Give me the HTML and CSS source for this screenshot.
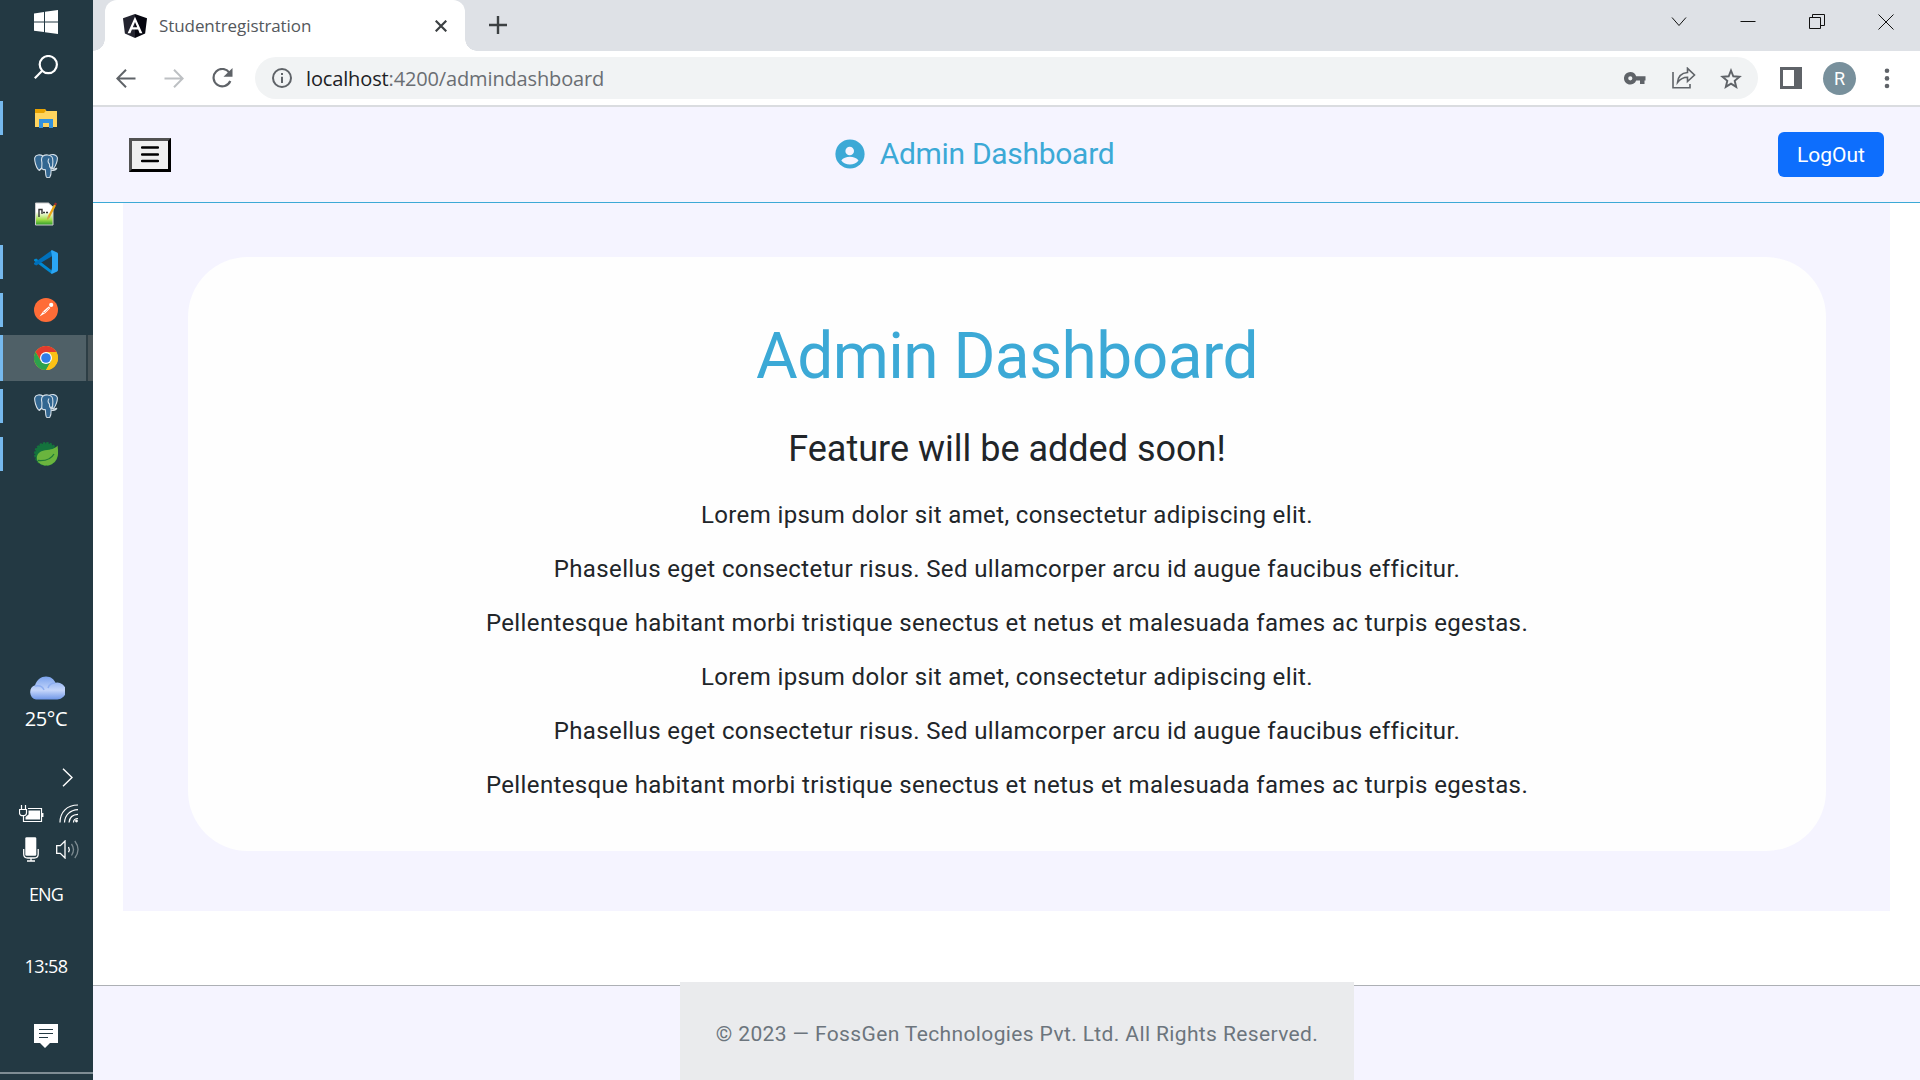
FILE: index.html
```html
<!DOCTYPE html>
<html lang="en">
<head>
<meta charset="utf-8">
<title>Studentregistration</title>
<link rel="stylesheet" href="styles.css">
</head>
<body>
<aside class="taskbar">
  <div class="task start"><svg width="24" height="24" viewBox="0 0 24 24" fill="#fff"><path d="M0 3.4 10 2v9.600H0zM11 1.800 24 0v11.600H11zM0 12.600h10V22L0 20.700zM11 12.600h13V24l-13-1.800z"/></svg></div>
  <div class="task search"><svg width="24" height="24" viewBox="0 0 24 24" fill="none" stroke="#fff" stroke-width="2.2"><circle cx="14.3" cy="9.6" r="8.6"/><path d="M8.2 15.8.8 23.2"/></svg></div>
  <div class="task app running"><svg width="24" height="24" viewBox="0 0 24 24"><path d="M1 3h10l1.500 2H23v16H1z" fill="#ffd45e"/><path d="M1 3h9.500l1.500 1.500-2 2.500H1z" fill="#e8a200"/><path d="M5 13h14v9h-4v-5H9v5H5z" fill="#3391dc"/></svg></div>
  <div class="task app"><svg width="24" height="24" viewBox="0 0 24 24"><use href="#elephant"/></svg></div>
  <div class="task app"><svg width="24" height="24" viewBox="0 0 24 24"><defs><linearGradient id="note" x1="0" y1="0" x2="0" y2="1"><stop offset=".4" stop-color="#fff"/><stop offset=".75" stop-color="#a5e04a"/><stop offset="1" stop-color="#2a9a28"/></linearGradient></defs><path d="M1.500 1h13l4.500 4v18H1.500z" fill="url(#note)" stroke="#ccc"/><path d="M5 15V7.500h3V12m1-1.500h2m1 0h2" fill="none" stroke="#333" stroke-width="1.400"/><path d="m13 18 1-4 6-11.500 2 1.100L16 15z" fill="#e9a616"/><path d="m20 2.500 1-2 2 1-1 2z" fill="#a52b2b"/><path d="m13 18 1-4 2 1z" fill="#c79d62"/></svg></div>
  <div class="task app running"><svg width="24" height="24" viewBox="0 0 24 24"><path d="m2.200 8.600 15.600 12V24L0 10.800v-1.200z" fill="#0089d2"/><path d="m2.200 15.400-2.200-1.100v-1.300L17.800.2 18 6.300z" fill="#0070bb"/><path d="m17.800 0 5.300 2.600q.9.400.9 1.400v16q0 1-.9 1.400L17.800 24l-.8-1 1-5.300V6.300L17 1z" fill="#2aa5f4"/></svg></div>
  <div class="task app running"><svg width="24" height="24" viewBox="0 0 24 24"><circle cx="12" cy="12" r="12" fill="#ff6c37"/><path d="m5.500 18.500 4-5.500 5.200-4.600 1.600 1.600-4.800 5z" fill="#fff"/><circle cx="17.200" cy="6.900" r="2.100" fill="#fff"/><path d="m8.500 13 1.500 2 5-5" fill="none" stroke="#ff8d65" stroke-width=".7"/></svg></div>
  <div class="task app running active"><svg width="24" height="24" viewBox="0 0 24 24"><circle cx="12" cy="12" r="12" fill="#fbc116"/><path d="M1.600 6A12 12 0 0 1 22.400 6H12L6.800 15z" fill="#e33b2e"/><path d="M1.600 6A12 12 0 0 0 12 24l5.200-9H6.800z" fill="#2da14d"/><path d="M12 24 17.200 15V6h5.200A12 12 0 0 1 12 24z" fill="#fbc116"/><circle cx="12" cy="12" r="6" fill="#fff"/><circle cx="12" cy="12" r="4.800" fill="#2f7de9"/></svg></div>
  <div class="task app running"><svg width="24" height="24" viewBox="0 0 24 24"><g id="elephant" fill="#336791" stroke="#d5e0e8" stroke-width="1.100" stroke-linejoin="round"><path d="M15 1.500c3-1.500 7-1.300 8.200 1.600.8 2.600-1.400 8.900-3.600 11.300l-2.600-.4z"/><path d="M9 2C6 .2 1.700.4.8 3.600c-.7 3 1.600 10.600 3.700 12.300 1.300 1 3-1.700 4-3z"/><path d="M9 2c2.800-1.800 7-1.400 9 1 1.400 2 .8 6 .6 9-.2 1.500-1.600 1.800-1.500 3.200.1 3.200-.1 6-1.100 7.600-1 1.200-3 1.200-3.700 0-.9-1.800-.6-4.900-1-7.300-1.400.2-3.300.1-3.500-1.600-.2-2 .5-4.300-.1-6.600C7.200 5 7.500 3.300 9 2z"/><path d="M18 12.500c-.5 2 .5 3.300 4.800 1.700-.5 1.500-3 2.500-5.700 2M15 4.500q-2 3 .4 5.500-.4 3 1.700 4.500M8 14l-3 2.500" fill="none"/></g></svg></div>
  <div class="task app running"><svg width="24" height="24" viewBox="0 0 24 24"><circle cx="12" cy="12" r="10.800" fill="#14733d"/><circle cx="12" cy="12" r="11" fill="none" stroke="#14733d" stroke-width="2" stroke-dasharray="2.300 1.155"/><path d="M23.500 3.500C21 7 17 7.500 11 8.300 5 9.200 2 13 3 17.500c1 5 9 8 15 4.500 7-4 6.500-12 5.500-18.500z" fill="#6ab43e"/><path d="M4 18.500c7 .6 13-1.200 16-6.500" fill="none" stroke="#217b36" stroke-width="1.300"/></svg></div>

  <div class="weather">
    <svg width="37" height="24" viewBox="0 0 37 24"><defs><linearGradient id="cloud" x1="0" y1="0" x2="0" y2="1"><stop stop-color="#7ba3ee"/><stop offset=".6" stop-color="#c5d6fa"/><stop offset="1" stop-color="#6f97e8"/></linearGradient></defs><path d="M8 23.500a7.500 7.500 0 0 1-1-14.300C9 3.500 13 .5 18 .5c5 0 8 3 9.500 6.200A8.500 8.500 0 1 1 29 23.500z" fill="url(#cloud)"/><path d="M7 10c5-1 8 1 9 4M27 7c-3 0-6 2-7 5" fill="none" stroke="#8eaef0" stroke-width="1.500"/></svg>
    <span>25°C</span>
  </div>
  <svg class="expand" width="12" height="19" viewBox="0 0 12 19" fill="none" stroke="#fff" stroke-width="1.400"><path d="m1 .7 9 8.800-9 8.800"/></svg>
  <div class="tray">
    <svg width="25" height="18" viewBox="0 0 25 18" fill="none" stroke="#fff"><path d="M2.500 0v4M6.500 0v4M4.500 11v5.500H22.500v-13H9" stroke-width="1.200"/><path d="M.5 4.500h7v3.200q0 3-3.500 3T.5 7.700z" stroke-width="1.200"/><path d="M6.500 14.500h14.500v-9H9.500v4L6.500 12z" fill="#fff" stroke="none"/><path d="M23.700 8v4" stroke-width="1.500"/></svg>
    <svg width="20" height="19" viewBox="0 0 20 19" fill="none" stroke="#fff" stroke-width="1.200"><path d="M1 18.500C1 8 8 1 19 1M5.500 18.500C6 11 11 6 19 5.600M10 18.500c.5-5 4-8 9-8.200"/><path d="M14.500 18.500c0-2.500 2-4 4.500-4"/><circle cx="17.500" cy="17" r="1.400" fill="#fff" stroke="none"/></svg>
  </div>
  <div class="tray second">
    <svg width="16" height="25" viewBox="0 0 16 25" fill="none" stroke="#fff" stroke-width="1.300"><rect x="2.300" y=".3" width="11" height="18.500" rx="1.300" fill="#fff" stroke="none"/><path d="M.7 12v5q0 4 4 4h6.500q4 0 4-4v-5M8 21v3M4 24h8"/></svg>
    <svg width="23" height="19" viewBox="0 0 23 19" fill="none" stroke="#fff" stroke-width="1.300"><path d="M.7 5.700h3.600L9 1v17l-4.700-4.600H.7z"/><path d="M12.500 7q1.500 2.500 0 5.300"/><path d="M15.500 4q4 5.500 0 11.500M18.800 1q6.500 8.500 0 17" stroke="#7d8b91"/></svg>
  </div>
  <div class="lang">ENG</div>
  <div class="clock">13:58</div>
  <svg class="notes" width="24" height="25" viewBox="0 0 24 25"><path d="M0 0h24v19h-8l-5 5-5-5H0z" fill="#fff"/><path d="M5 5.500h14M5 9.500h14M5 13.500h9" stroke="#233943" stroke-width="1.200"/></svg>
</aside>

<div class="browser">
  <div class="tabs">
    <div class="tab">
      <svg width="24" height="24" viewBox="0 0 24 24"><path d="M12 0 0 4.200 1.900 19.500 12 24z" fill="#23242f"/><path d="M12 0 24 4.200 22.100 19.500 12 24z" fill="#05060f"/><path d="m12 2.700-7.400 16.600h2.800l1.500-3.700h6.200l1.500 3.700h2.800zm0 5.200 2.200 5.400H9.800z" fill="#fff"/></svg>
      <span class="tab-title">Studentregistration</span>
      <svg class="tab-close" width="12" height="12" viewBox="0 0 12 12"><path d="m.7.7 10.600 10.600M11.300.7.7 11.300" stroke="#3c4043" stroke-width="2.200"/></svg>
    </div>
    <svg class="new-tab" width="18" height="18" viewBox="0 0 18 18"><path d="M9 0v18M0 9h18" stroke="#3c4043" stroke-width="2.400"/></svg>
    <div class="window-controls">
      <svg width="16" height="16" viewBox="0 0 16 16"><path d="m1 3.500 7 8 7-8"/></svg>
      <svg width="16" height="16" viewBox="0 0 16 16"><path d="M.5 7.500h15"/></svg>
      <svg width="16" height="16" viewBox="0 0 16 16"><path d="M.5 3.500h11v11H.5zM3.500 3.500v-3h12v11h-4"/></svg>
      <svg width="16" height="16" viewBox="0 0 16 16"><path d="m.5.500 15 15M15.500.500l-15 15"/></svg>
    </div>
  </div>
  <div class="toolbar">
    <svg class="back" width="20" height="19" viewBox="0 0 20 19" fill="none" stroke="#5f6368" stroke-width="2"><path d="M19.500 9.500H1.500M10 .7 1.300 9.500l8.700 8.800"/></svg>
    <svg class="forward" width="20" height="19" viewBox="0 0 20 19" fill="none" stroke="#bdc0c3" stroke-width="2"><path d="M.5 9.500h18M10 .7l8.700 8.800-8.700 8.800"/></svg>
    <svg class="reload" width="21" height="20" viewBox="0 0 21 20"><path d="M17.500 4.800A8.700 8.700 0 1 0 18.300 13" fill="none" stroke="#5f6368" stroke-width="2.200"/><path d="M20.500 0v8.800h-9z" fill="#5f6368"/></svg>
    <div class="address">
      <svg width="20" height="20" viewBox="0 0 20 20"><circle cx="10" cy="10" r="9" fill="none" stroke="#5f6368" stroke-width="2"/><path d="M9 5h2v2H9zM9 8.700h2V15H9z" fill="#5f6368"/></svg>
      <span class="url">localhost<span class="path">:4200/admindashboard</span></span>
      <svg class="key" width="22" height="13" viewBox="0 0 22 13"><path d="M6.300 0a6.300 6.300 0 1 0 5.900 8.400H16V12h4.500V8.400H21.500V4.300h-9.300A6.300 6.300 0 0 0 6.300 0zm0 4.200a2.100 2.100 0 1 1 0 4.200 2.100 2.100 0 0 1 0-4.200z" fill="#5f6368" fill-rule="evenodd"/></svg>
      <svg class="share" width="24" height="22" viewBox="0 0 24 22" fill="none" stroke="#5f6368" stroke-width="1.600"><path d="M1 5v15.800h17V17"/><path d="M5.500 15.500C6 9.500 9.500 6 15.500 5.500V1.300L22.500 8l-7 6.500v-4.200q-6 0-10 5.200z"/></svg>
      <svg class="star" width="22" height="21" viewBox="0 0 22 21"><path d="m11 2.500 2.300 5.800 6.200.5-4.800 4 1.500 6.100L11 15.600l-5.200 3.300 1.500-6.100-4.800-4 6.200-.5z" fill="none" stroke="#5f6368" stroke-width="1.900"/></svg>
    </div>
    <svg class="panel" width="22" height="22" viewBox="0 0 22 22"><path d="M0 0h22v22H0zM3 3v16h11V3z" fill="#5f6368" fill-rule="evenodd"/></svg>
    <div class="avatar">R</div>
    <svg class="more" width="6" height="21" viewBox="0 0 6 21" fill="#5f6368"><circle cx="3" cy="2.700" r="2.300"/><circle cx="3" cy="10.400" r="2.300"/><circle cx="3" cy="18" r="2.300"/></svg>
  </div>

  <div class="page">
    <header class="header">
      <button class="menu"><svg width="18" height="17" viewBox="0 0 18 17"><path d="M1 1.500h16M1 8.500h16M1 15h16" stroke="#000" stroke-width="2.400" stroke-linecap="round"/></svg></button>
      <div class="brand">
        <svg width="30" height="30" viewBox="0 0 30 30"><circle cx="15" cy="15" r="14.600" fill="#3ca9d6"/><circle cx="14.700" cy="12" r="4.300" fill="#f5f4ff"/><path d="M6.300 21.500c3.500-5 13.700-5 17.200 0-3.500 5.300-13.700 5.300-17.200 0z" fill="#f5f4ff"/></svg>
        <span>Admin Dashboard</span>
      </div>
      <button class="logout">LogOut</button>
    </header>
    <main class="content">
      <section class="card">
        <h1>Admin Dashboard</h1>
        <h2>Feature will be added soon!</h2>
        <p>Lorem ipsum dolor sit amet, consectetur adipiscing elit.</p>
        <p>Phasellus eget consectetur risus. Sed ullamcorper arcu id augue faucibus efficitur.</p>
        <p>Pellentesque habitant morbi tristique senectus et netus et malesuada fames ac turpis egestas.</p>
        <p>Lorem ipsum dolor sit amet, consectetur adipiscing elit.</p>
        <p>Phasellus eget consectetur risus. Sed ullamcorper arcu id augue faucibus efficitur.</p>
        <p>Pellentesque habitant morbi tristique senectus et netus et malesuada fames ac turpis egestas.</p>
      </section>
    </main>
    <footer class="footer"><div class="copyright">© 2023 — FossGen Technologies Pvt. Ltd. All Rights Reserved.</div></footer>
  </div>
</div>
</body>
</html>
```
FILE: styles.css
```css
* { box-sizing: border-box; }
body {
  margin: 0;
  width: 1920px;
  height: 1080px;
  display: flex;
  overflow: hidden;
  background: #fff;
  font-family: Roboto, "Liberation Sans", sans-serif;
  color: #212529;
}
svg { display: block; flex: none; }
h1, h2, p { margin: 0; font-weight: 400; }

.taskbar {
  width: 93px;
  flex: none;
  background: #233943;
  color: #fff;
  font-family: "Open Sans", "Noto Sans", sans-serif;
  display: flex;
  flex-direction: column;
  border-bottom: 6px solid #233943;
  box-shadow: inset 0 -2px #7f8d94;
}
.task { height: 48px; display: flex; align-items: center; padding-left: 34px; flex: none; }
.start { height: 44px; }
.search { height: 50px; padding-bottom: 5px; }
.app { margin: 7px 0; height: 34px; }
.running { border-left: 3px solid #76b9ed; padding-left: 31px; }
.active {
  height: 46px;
  margin: 1px 0;
  background: linear-gradient(90deg, #4f6067 83px, #2d3e45 83px 85px, #495559 85px);
  background-origin: padding-box;
}
.weather {
  margin-top: 198px;
  display: flex;
  flex-direction: column;
  align-items: center;
  font-size: 20px;
  line-height: 28px;
  letter-spacing: -0.4px;
  gap: 5px;
  padding-right: 1px;
}
.expand { margin: 35px 0 0 62px; }
.tray { display: flex; gap: 15px; padding-left: 19px; margin-top: 17px; align-items: center; }
.second { gap: 17px; padding-left: 23px; margin-top: 14px; }
.lang, .clock { text-align: center; font-size: 18px; line-height: 24px; letter-spacing: -0.8px; padding-right: 1px; }
.lang { margin-top: 20px; }
.clock { margin-top: 48px; letter-spacing: -0.6px; }
.notes { margin: 46px 0 0 34px; }

.browser { flex: 1; display: flex; flex-direction: column; min-width: 0; }
.tabs { height: 51px; background: #dee1e6; display: flex; padding-left: 12px; flex: none; }
.tab {
  width: 360px;
  background: #fff;
  border-radius: 12px 12px 0 0;
  display: flex;
  align-items: center;
  padding: 0 18px;
  position: relative;
}
.tab::before, .tab::after {
  content: "";
  position: absolute;
  bottom: 0;
  width: 12px;
  height: 12px;
}
.tab::before { left: -12px; background: radial-gradient(circle at 0 0, transparent 11.500px, #fff 12px); }
.tab::after { right: -12px; background: radial-gradient(circle at 100% 0, transparent 11.500px, #fff 12px); }
.tab-title {
  margin-left: 12px;
  font: 17px "Open Sans", "Noto Sans", sans-serif;
  letter-spacing: -0.08px;
  color: #54585c;
}
.tab-close { margin-left: auto; }
.new-tab { margin: 16px 0 0 24px; }
.window-controls {
  margin-left: auto;
  display: flex;
  gap: 53px;
  padding: 14px 26px 0 0;
  fill: none;
  stroke: #111;
  stroke-width: 1;
}
.toolbar {
  height: 56px;
  flex: none;
  border-bottom: 2px solid #dadce0;
  display: flex;
  align-items: center;
  padding-left: 23px;
}
.forward { margin-left: 28px; }
.reload { margin-left: 28px; }
.address {
  width: 1503px;
  height: 42px;
  margin-left: 22px;
  border-radius: 21px;
  background: #f1f3f4;
  display: flex;
  align-items: center;
  padding: 0 16px 0 17px;
}
.url {
  margin-left: 14px;
  font: 20px "Open Sans", "Noto Sans", sans-serif;
  letter-spacing: -0.14px;
  color: #202124;
}
.path { color: #6a6e73; }
.key { margin-left: auto; }
.share { margin-left: 26px; }
.star { margin-left: 24px; }
.panel { margin-left: 22px; }
.avatar {
  width: 33px;
  height: 33px;
  margin-left: 21px;
  border-radius: 50%;
  background: #78909c;
  color: #fff;
  font-size: 18px;
  line-height: 33px;
  text-align: center;
}
.more { margin-left: 28px; }

.page { flex: 1; display: flex; flex-direction: column; }
.header {
  height: 96px;
  background: #f5f4ff;
  border-bottom: 1px solid #3ca9d6;
  display: flex;
  align-items: center;
  justify-content: space-between;
  padding: 0 36px;
}
.menu {
  width: 42px;
  height: 34px;
  padding: 0 0 0 9px;
  background: #efefef;
  border: 3px solid;
  border-color: #525252 #000 #000 #525252;
}
.brand {
  display: flex;
  align-items: center;
  gap: 15px;
  padding-bottom: 2px;
  font-size: 30px;
  letter-spacing: -0.300px;
  color: #3ca9d6;
}
.logout {
  width: 106px;
  height: 45px;
  border: 0;
  border-radius: 6px;
  background: #0d6efd;
  color: #fff;
  font: 21px Roboto, sans-serif;
}
.content { height: 708px; margin: 0 30px; padding: 54px 64px 0 65px; background: #f5f4ff; }
.card {
  height: 594px;
  border-radius: 60px;
  background: #fefefe;
  text-align: center;
  padding-top: 62px;
}
h1 { font-size: 64px; line-height: 76px; letter-spacing: -0.55px; color: #3ca9d6; }
h2 { font-size: 36px; line-height: 44px; margin: 32px 0 17px; }
p { font-size: 24px; line-height: 54px; letter-spacing: 0.375px; }
.footer { margin-top: 74px; flex: 1; background: #f5f4ff; border-top: 1px solid #adb0b5; }
.copyright {
  width: 674px;
  height: 99px;
  margin: -4px 0 0 587px;
  background: #eaebed;
  color: #6c757d;
  font-size: 21px;
  line-height: 105px;
  letter-spacing: 0.375px;
  text-align: center;
}
```
